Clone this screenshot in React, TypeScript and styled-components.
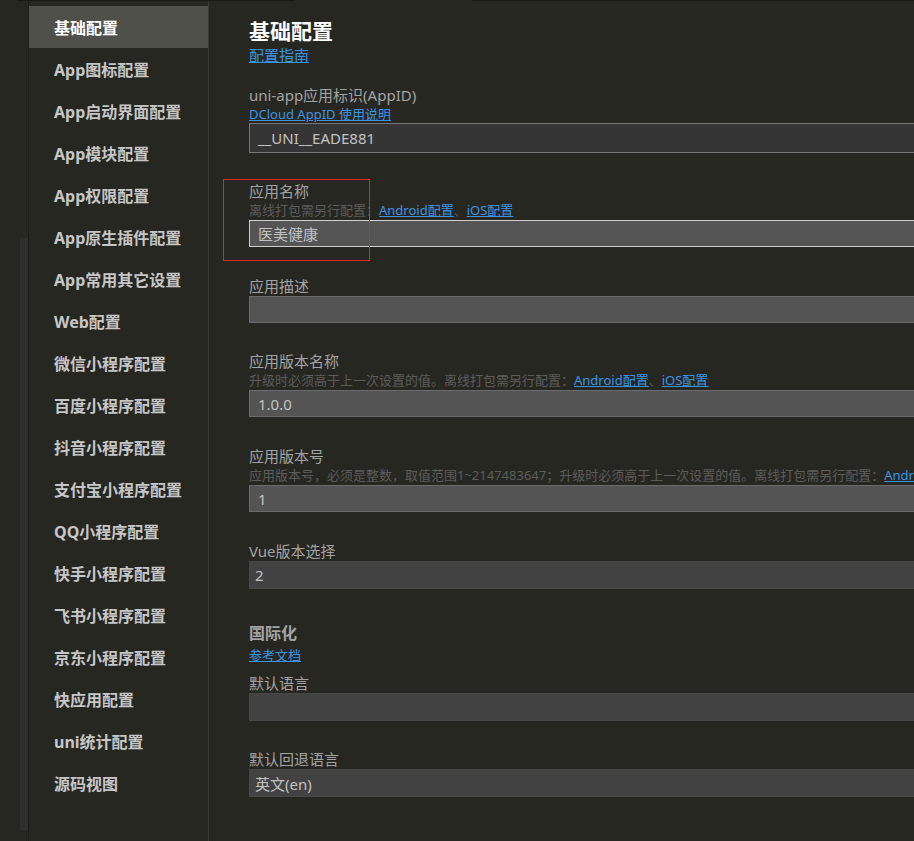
import React from 'react';
import styled, { createGlobalStyle } from 'styled-components';

const GlobalStyle = createGlobalStyle`
  html, body {
    margin: 0;
    padding: 0;
    background: #272722;
    overflow: hidden;
  }
  body {
    font-family: "Noto Sans", "Noto Sans CJK SC", sans-serif;
  }
`;

const Page = styled.div`
  width: 914px;
  height: 841px;
  display: flex;
  flex-direction: column;
  overflow: hidden;
  background: #272722;
`;

const TopEdge = styled.div`
  height: 1px;
  flex: none;
  display: flex;
`;

const EdgeSegment = styled.div<{ $w: number; $dark?: boolean }>`
  width: ${(p) => p.$w}px;
  flex: ${(p) => (p.$w === 0 ? 1 : 'none')};
  background: ${(p) => (p.$dark ? '#181815' : 'transparent')};
`;

const Body = styled.div`
  flex: 1;
  display: flex;
  min-height: 0;
`;

const Gutter = styled.div`
  width: 29px;
  flex: none;
  border-right: 1px solid #1c1c19;
  display: flex;
  justify-content: flex-end;
  padding-top: 237px;
  box-sizing: border-box;
`;

const Thumb = styled.div`
  width: 8px;
  height: 592px;
  background: #2f2f2b;
`;

const Sidebar = styled.nav`
  width: 179px;
  flex: none;
  border-right: 1px solid #3a3a36;
  padding-top: 5px;
  display: flex;
  flex-direction: column;
`;

const NavItem = styled.div<{ $active?: boolean }>`
  height: 42px;
  display: flex;
  align-items: center;
  padding-left: 25px;
  font-size: 16px;
  font-weight: 700;
  color: ${(p) => (p.$active ? '#ffffff' : '#c6c6c6')};
  background: ${(p) => (p.$active ? '#50504a' : 'transparent')};
  white-space: nowrap;
`;

const Main = styled.main`
  flex: 1;
  padding: 17px 0 0 40px;
  min-width: 0;
`;

const Title = styled.h1`
  margin: 0;
  font-size: 21px;
  line-height: 27px;
  font-weight: 700;
  color: #ffffff;
`;

const Link = styled.a`
  color: #3a95e6;
  text-decoration: underline;
  cursor: pointer;
`;

const LinkLine = styled.div<{ $size?: number; $lh?: number }>`
  font-size: ${(p) => p.$size ?? 13}px;
  line-height: ${(p) => p.$lh ?? 18}px;
`;

const Field = styled.div<{ $gap: number }>`
  position: relative;
  margin-top: ${(p) => p.$gap}px;
`;

const Label = styled.div`
  font-size: 15px;
  line-height: 20px;
  color: #a3a3a3;
  white-space: nowrap;
`;

const Desc = styled.div`
  font-size: 13px;
  line-height: 19px;
  color: #5c5c5a;
  white-space: nowrap;
`;

type Tone = 'id' | 'focus' | 'text' | 'select';

const tones: Record<Tone, { bg: string; border: string; h: number }> = {
  id: { bg: '#353535', border: '#787878', h: 30 },
  focus: { bg: '#555555', border: '#cfcfcf', h: 27 },
  text: { bg: '#545454', border: '#6b6b6b', h: 27 },
  select: { bg: '#424242', border: '#474747', h: 28 },
};

const Input = styled.div<{ $tone: Tone }>`
  box-sizing: border-box;
  width: 720px;
  height: ${(p) => tones[p.$tone].h}px;
  background: ${(p) => tones[p.$tone].bg};
  border: 1px solid ${(p) => tones[p.$tone].border};
  display: flex;
  align-items: center;
  padding-left: ${(p) => (p.$tone === 'select' ? 5 : 8)}px;
  font-size: 15px;
  color: #c2c2c2;
`;

const SectionTitle = styled.div`
  margin-top: 33px;
  font-size: 16px;
  line-height: 22px;
  font-weight: 700;
  color: #a3a3a3;
`;

// red highlight drawn over the 应用名称 field
const Annotation = styled.div`
  position: absolute;
  z-index: 2;
  left: -26px;
  top: -2px;
  width: 147px;
  height: 82px;
  border: 1px solid #e8202a;
  box-sizing: border-box;
  pointer-events: none;
`;

const navItems = [
  '基础配置',
  'App图标配置',
  'App启动界面配置',
  'App模块配置',
  'App权限配置',
  'App原生插件配置',
  'App常用其它设置',
  'Web配置',
  '微信小程序配置',
  '百度小程序配置',
  '抖音小程序配置',
  '支付宝小程序配置',
  'QQ小程序配置',
  '快手小程序配置',
  '飞书小程序配置',
  '京东小程序配置',
  '快应用配置',
  'uni统计配置',
  '源码视图',
];

const OfflineLinks = () => (
  <>
    <Link>Android配置</Link>、<Link>iOS配置</Link>
  </>
);

export default function App() {
  return (
    <>
      <GlobalStyle />
      <Page>
        <TopEdge>
          <EdgeSegment $w={17} />
          <EdgeSegment $w={278} $dark />
          <EdgeSegment $w={177} />
          <EdgeSegment $w={0} $dark />
        </TopEdge>
        <Body>
          <Gutter>
            <Thumb />
          </Gutter>
          <Sidebar>
            {navItems.map((item, i) => (
              <NavItem key={item} $active={i === 0}>
                {item}
              </NavItem>
            ))}
          </Sidebar>
          <Main>
            <Title>基础配置</Title>
            <LinkLine $size={15} $lh={20}>
              <Link>配置指南</Link>
            </LinkLine>

            <Field $gap={20}>
              <Label>uni-app应用标识(AppID)</Label>
              <LinkLine>
                <Link>DCloud AppID 使用说明</Link>
              </LinkLine>
              <Input $tone="id">__UNI__EADE881</Input>
            </Field>

            <Field $gap={28}>
              <Label>应用名称</Label>
              <Desc>
                离线打包需另行配置：<OfflineLinks />
              </Desc>
              <Input $tone="focus">医美健康</Input>
              <Annotation />
            </Field>

            <Field $gap={29}>
              <Label>应用描述</Label>
              <Input $tone="text" />
            </Field>

            <Field $gap={28}>
              <Label>应用版本名称</Label>
              <Desc>
                升级时必须高于上一次设置的值。离线打包需另行配置：<OfflineLinks />
              </Desc>
              <Input $tone="text">1.0.0</Input>
            </Field>

            <Field $gap={29}>
              <Label>应用版本号</Label>
              <Desc>
                应用版本号，必须是整数，取值范围1~2147483647；升级时必须高于上一次设置的值。离线打包需另行配置：
                <OfflineLinks />
              </Desc>
              <Input $tone="text">1</Input>
            </Field>

            <Field $gap={29}>
              <Label>Vue版本选择</Label>
              <Input $tone="select">2</Input>
            </Field>

            <SectionTitle>国际化</SectionTitle>
            <LinkLine $lh={22}>
              <Link>参考文档</Link>
            </LinkLine>

            <Field $gap={7}>
              <Label>默认语言</Label>
              <Input $tone="select" />
            </Field>

            <Field $gap={28}>
              <Label>默认回退语言</Label>
              <Input $tone="select">英文(en)</Input>
            </Field>
          </Main>
        </Body>
      </Page>
    </>
  );
}
